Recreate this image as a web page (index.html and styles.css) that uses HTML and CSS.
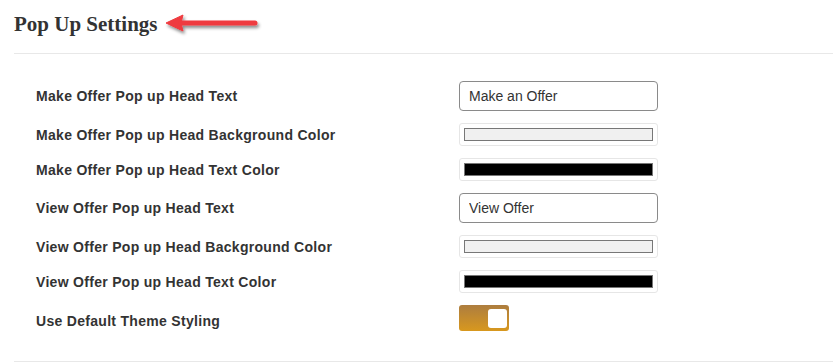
FILE: index.html
```html
<!DOCTYPE html>
<html lang="en">
<head>
    <meta charset="UTF-8">
    <meta name="viewport" content="width=device-width, initial-scale=1.0">
    <title>Pop Up Settings</title>
    <link rel="stylesheet" href="styles.css">
</head>
<body>
    <div class="page">
        <div class="section-head">
            <h2>Pop Up Settings</h2>
            <!-- pointer arrow -->
            <svg class="pointer" width="96" height="24" viewBox="0 0 96 24">
                <defs>
                    <filter id="shadow" x="-10%" y="-50%" width="130%" height="220%">
                        <feDropShadow dx="1.5" dy="2.5" stdDeviation="1.6" flood-color="#000" flood-opacity="0.45"/>
                    </filter>
                </defs>
                <g filter="url(#shadow)" fill="#ef3b3f" stroke="#ef3b3f">
                    <polygon points="2,11 19,3 17,11 19,19" stroke-linejoin="round" stroke-width="1"/>
                    <line x1="17" y1="11" x2="91" y2="11" stroke-width="5" stroke-linecap="round"/>
                </g>
            </svg>
        </div>

        <div class="settings">
            <label class="field-label">Make Offer Pop up Head Text</label>
            <input type="text" class="text-field" value="Make an Offer">

            <label class="field-label">Make Offer Pop up Head Background Color</label>
            <input type="color" class="color-field" value="#f0f0f0">

            <label class="field-label">Make Offer Pop up Head Text Color</label>
            <input type="color" class="color-field" value="#000000">

            <label class="field-label">View Offer Pop up Head Text</label>
            <input type="text" class="text-field" value="View Offer">

            <label class="field-label">View Offer Pop up Head Background Color</label>
            <input type="color" class="color-field" value="#f0f0f0">

            <label class="field-label">View Offer Pop up Head Text Color</label>
            <input type="color" class="color-field" value="#000000">

            <label class="field-label field-label-low">Use Default Theme Styling</label>
            <span class="toggle is-on"><span class="knob"></span></span>
        </div>
    </div>
</body>
</html>
```

FILE: styles.css
```css
/* Page */
body {
    margin: 0;
    background: #fff;
    color: #333;
    font-family: "Liberation Sans", Arial, sans-serif;
}

.page {
    padding-left: 14px;
}

/* Heading */
.section-head {
    display: flex;
    align-items: center;
    gap: 6px;
    padding: 12px 0 17px;
    border-bottom: 1px solid #e8e8e8;
}

.section-head h2 {
    margin: 0;
    font-family: "Liberation Serif", "Times New Roman", serif;
    font-size: 21px;
    line-height: 24px;
    font-weight: bold;
    color: #333;
}

.pointer {
    display: block;
    overflow: visible;
}

/* Settings rows */
.settings {
    display: grid;
    grid-template-columns: 423px 199px;
    row-gap: 12px;
    align-items: center;
    margin-top: 27px;
    padding: 0 0 30px 22px;
    border-bottom: 1px solid #e8e8e8;
}

.field-label {
    font-size: 14px;
    font-weight: bold;
    letter-spacing: 0.3px;
    color: #333;
}

.field-label-low {
    padding-top: 6px;
}

.text-field {
    box-sizing: border-box;
    width: 199px;
    height: 30px;
    margin: 0;
    padding: 0 9px;
    border: 1px solid #8a8a8a;
    border-radius: 4px;
    font-family: "Liberation Sans", Arial, sans-serif;
    font-size: 14px;
    color: #333;
    outline: none;
}

.color-field {
    -webkit-appearance: none;
    appearance: none;
    box-sizing: border-box;
    width: 199px;
    height: 23px;
    margin: 0;
    padding: 4px;
    border: 1px solid #e6e6e6;
    border-radius: 3px;
    background: #fff;
    cursor: pointer;
}

.color-field::-webkit-color-swatch-wrapper {
    padding: 0;
}

.color-field::-webkit-color-swatch {
    border: 1px solid #777;
    border-radius: 0;
}

/* Toggle */
.toggle {
    box-sizing: border-box;
    display: flex;
    align-items: center;
    justify-content: flex-end;
    width: 50px;
    height: 26px;
    padding: 0 2px;
    border-radius: 3px;
    background: linear-gradient(to bottom, #ad7d3f, #d8981e);
    cursor: pointer;
}

.knob {
    width: 19px;
    height: 19px;
    border-radius: 3px;
    background: #fff;
}
```
